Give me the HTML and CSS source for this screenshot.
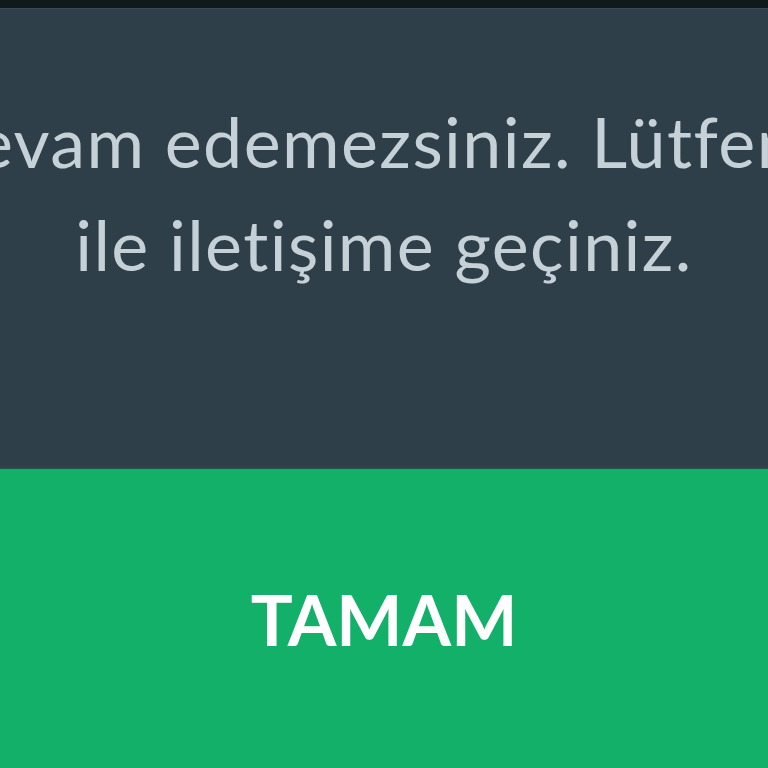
FILE: index.html
```html
<!DOCTYPE html>
<html lang="tr">
<head>
<meta charset="utf-8">
<link rel="stylesheet" href="styles.css">
</head>
<body>
<div class="screen">
  <div class="topbar"></div>
  <div class="panel">
    <p class="message">
      <span class="line">İşleme devam edemezsiniz. Lütfen müşteri</span>
      <span class="line">ile iletişime geçiniz.</span>
    </p>
  </div>
  <div class="action">
    <span class="action-label">TAMAM</span>
  </div>
</div>
</body>
</html>
```
FILE: styles.css
```css
html, body {
  margin: 0;
  padding: 0;
  background: #2f404a;
}
.screen {
  width: 768px;
  height: 768px;
  display: flex;
  flex-direction: column;
  overflow: hidden;
  font-family: "Lato", "Noto Sans", sans-serif;
}
.topbar {
  height: 8px;
  background: #111a1b;
  border-bottom: 1px solid #3a4a52;
  flex: none;
}
.panel {
  height: 460px;
  flex: none;
  background: #2e3f4a;
  border-bottom: 2px solid #19573f;
  display: flex;
  justify-content: center;
  padding-top: 81px;
  box-sizing: border-box;
}
.message {
  margin: 0;
  width: 768px;
  display: flex;
  flex-direction: column;
  align-items: center;
  font-size: 70px;
  line-height: 103px;
  letter-spacing: 1.4px;
  font-variant-ligatures: none;
  color: #c6d0d7;
  overflow: hidden;
}
.line {
  white-space: nowrap;
}
.action {
  flex: 1;
  background: #13b06a;
  display: flex;
  align-items: center;
  justify-content: center;
}
.action-label {
  color: #ffffff;
  font-weight: 700;
  font-size: 70px;
}
```
